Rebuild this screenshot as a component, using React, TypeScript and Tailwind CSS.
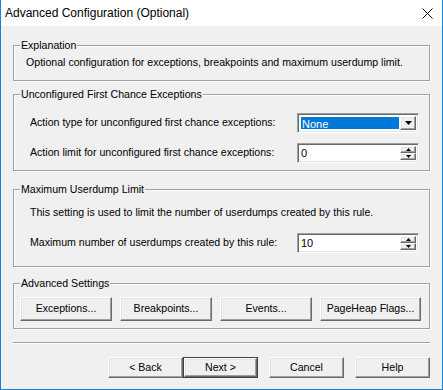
import React from 'react';

const raised =
  'border border-t-white border-l-white border-b-[#696969] border-r-[#696969] shadow-[inset_-1px_-1px_0_#a0a0a0,inset_1px_1px_0_#e3e3e3] bg-[#f0f0f0]';
const sunken =
  'border border-t-[#a0a0a0] border-l-[#a0a0a0] border-b-white border-r-white shadow-[inset_1px_1px_0_#696969,inset_-1px_-1px_0_#e3e3e3] bg-white';

const Group: React.FC<{ title: string; className?: string; children: React.ReactNode }> = ({ title, className, children }) => (
  <fieldset className={`border border-[#a0a0a0] shadow-[inset_1px_1px_0_#fff,1px_1px_0_#fff] ${className ?? ''}`}>
    <legend className="ml-[6px] px-[1px] leading-[13px] bg-[#f0f0f0]">{title}</legend>
    {children}
  </fieldset>
);

const Arrow: React.FC<{ up?: boolean; small?: boolean }> = ({ up, small }) => (
  <svg width={small ? 5 : 7} height={small ? 3 : 4} viewBox={small ? '0 0 5 3' : '0 0 7 4'}>
    {small ? (
      <polygon points={up ? '2.5,0 5,3 0,3' : '0,0 5,0 2.5,3'} fill="#000" />
    ) : (
      <polygon points={up ? '3.5,0 7,4 0,4' : '0,0 7,0 3.5,4'} fill="#000" />
    )}
  </svg>
);

const Spin: React.FC<{ value: string }> = ({ value }) => (
  <div className={`w-[122px] h-[20px] flex items-center ${sunken} p-[2px]`}>
    <span className="flex-1 pl-[1px] leading-[13px] text-[11px]">{value}</span>
    <div className="w-[16px] h-full flex flex-col">
      <div className={`flex-1 flex items-center justify-center ${raised}`}>
        <Arrow up small />
      </div>
      <div className={`flex-1 flex items-center justify-center ${raised}`}>
        <Arrow small />
      </div>
    </div>
  </div>
);

const Combo: React.FC<{ value: string }> = ({ value }) => (
  <div className={`w-[122px] h-[20px] flex items-center ${sunken} p-[2px]`}>
    <div className="flex-1 h-full p-[1px]">
      <div className="h-full bg-[#0078d7] text-white leading-[14px] pl-[1px] text-[11px]">{value}</div>
    </div>
    <div className={`w-[16px] h-full flex items-center justify-center ${raised}`}>
      <Arrow />
    </div>
  </div>
);

const Btn: React.FC<{ label: string; className?: string }> = ({ label, className }) => (
  <button className={`flex items-center justify-center ${raised} ${className ?? ''}`}>{label}</button>
);

export default function App() {
  return (
    <div className="w-[443px] h-[390px] bg-[#f0f0f0] border-x border-b border-[#1883d7] flex flex-col font-['Liberation_Sans',Arial,sans-serif] text-[10.6px] text-black">
      <div className="h-[26px] bg-white flex items-center pl-[4px] pr-[9px] text-[12px]">
        <span className="flex-1">Advanced Configuration (Optional)</span>
        <svg width="11" height="11" viewBox="0 0 11 11">
          <path d="M0.5 0.5 L10.5 10.5 M10.5 0.5 L0.5 10.5" stroke="#000" strokeWidth="1" />
        </svg>
      </div>

      <div className="flex flex-col px-[12px]">
        <Group title="Explanation" className="mt-[13px] h-[42px]">
          <p className="pt-[4px] pl-[12px] leading-[13px]">
            Optional configuration for exceptions, breakpoints and maximum userdump limit.
          </p>
        </Group>

        <Group title="Unconfigured First Chance Exceptions" className="mt-[7px] h-[83px]">
          <div className="flex flex-col gap-[10px] pt-[12px] pl-[16px] pr-[10px]">
            <div className="flex items-center">
              <span className="flex-1">Action type for unconfigured first chance exceptions:</span>
              <Combo value="None" />
            </div>
            <div className="flex items-center">
              <span className="flex-1">Action limit for unconfigured first chance exceptions:</span>
              <Spin value="0" />
            </div>
          </div>
        </Group>

        <Group title="Maximum Userdump Limit" className="mt-[12px] h-[84px]">
          <div className="pl-[16px] pr-[10px]">
            <p className="pt-[10px] leading-[13px]">
              This setting is used to limit the number of userdumps created by this rule.
            </p>
            <div className="flex items-center mt-[14px]">
              <span className="flex-1">Maximum number of userdumps created by this rule:</span>
              <Spin value="10" />
            </div>
          </div>
        </Group>

        <Group title="Advanced Settings" className="mt-[10px] h-[52px]">
          <div className="flex gap-[8px] pt-[7px] pl-[6px]">
            <Btn label="Exceptions..." className="w-[92px] h-[24px]" />
            <Btn label="Breakpoints..." className="w-[92px] h-[24px]" />
            <Btn label="Events..." className="w-[92px] h-[24px]" />
            <Btn label="PageHeap Flags..." className="w-[101px] h-[24px]" />
          </div>
        </Group>

        <div className="mt-[13px] h-[2px] border-t border-[#a0a0a0] border-b border-b-white" />

        <div className="flex justify-end mt-[13px] gap-[11px]">
          <div className="flex">
            <Btn label="< Back" className="w-[75px] h-[21px]" />
            <div className="border border-[#404040]">
              <Btn label="Next >" className="w-[73px] h-[19px]" />
            </div>
          </div>
          <Btn label="Cancel" className="w-[75px] h-[21px]" />
          <Btn label="Help" className="w-[75px] h-[21px]" />
        </div>
      </div>
    </div>
  );
}
